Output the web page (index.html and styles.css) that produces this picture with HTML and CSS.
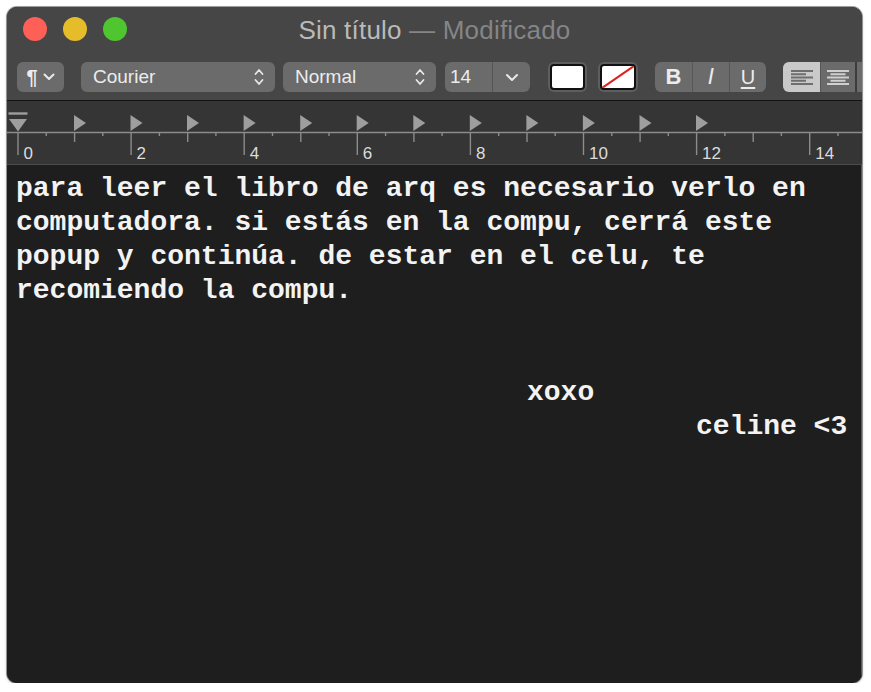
FILE: index.html
```html
<!DOCTYPE html>
<html lang="es">
<head>
<meta charset="utf-8">
<title>Sin título — Modificado</title>
<link rel="stylesheet" href="styles.css">
</head>
<body>
<div class="window">
  <div class="titlebar">
    <div class="lights">
      <span class="light red"></span>
      <span class="light yellow"></span>
      <span class="light green"></span>
    </div>
    <div class="title"><span class="name">Sin título</span><span class="mod"> — Modificado</span></div>
  </div>
  <div class="toolbar">
    <div class="ctl para">
      <span class="pilcrow">¶</span>
      <svg class="chev" width="12" height="8" viewBox="0 0 12 8"><path d="M1.5 1.5 L6 6 L10.5 1.5" fill="none" stroke="#e8e8e8" stroke-width="2" stroke-linecap="round" stroke-linejoin="round"/></svg>
    </div>
    <div class="ctl popup font">
      <span class="label">Courier</span>
      <svg class="updown" width="10" height="18" viewBox="0 0 10 18"><path d="M1.5 6 L5 2 L8.5 6 M1.5 12 L5 16 L8.5 12" fill="none" stroke="#e8e8e8" stroke-width="1.8" stroke-linecap="round" stroke-linejoin="round"/></svg>
    </div>
    <div class="ctl popup style">
      <span class="label">Normal</span>
      <svg class="updown" width="10" height="18" viewBox="0 0 10 18"><path d="M1.5 6 L5 2 L8.5 6 M1.5 12 L5 16 L8.5 12" fill="none" stroke="#e8e8e8" stroke-width="1.8" stroke-linecap="round" stroke-linejoin="round"/></svg>
    </div>
    <div class="ctl combo">
      <span class="field">14</span>
      <span class="drop"><svg width="14" height="9" viewBox="0 0 14 9"><path d="M2 2 L7 7 L12 2" fill="none" stroke="#e8e8e8" stroke-width="2" stroke-linecap="round" stroke-linejoin="round"/></svg></span>
    </div>
    <div class="well"><span class="swatch"></span></div>
    <div class="well second"><span class="swatch none"><svg width="32" height="20" viewBox="0 0 32 20" preserveAspectRatio="none"><path d="M0 20 L32 0" stroke="#e0201c" stroke-width="2"/></svg></span></div>
    <div class="ctl seg biu">
      <span class="cell b">B</span>
      <span class="cell i">I</span>
      <span class="cell u">U</span>
    </div>
    <div class="ctl seg align">
      <span class="cell sel">
        <svg width="22" height="15" viewBox="0 0 22 15"><g fill="#6e6e6e"><rect x="0" y="0" width="22" height="2"/><rect x="0" y="3.25" width="15" height="2"/><rect x="0" y="6.5" width="22" height="2"/><rect x="0" y="9.75" width="15" height="2"/><rect x="0" y="13" width="22" height="2"/></g></svg>
      </span>
      <span class="cell">
        <svg width="22" height="15" viewBox="0 0 22 15"><g fill="#cfcfcf"><rect x="0" y="0" width="22" height="2"/><rect x="3.5" y="3.25" width="15" height="2"/><rect x="0" y="6.5" width="22" height="2"/><rect x="3.5" y="9.75" width="15" height="2"/><rect x="0" y="13" width="22" height="2"/></g></svg>
      </span>
    </div>
  </div>
  <div class="ruler">
    <svg width="855" height="63" viewBox="0 0 855 63">
      <g stroke="#8c8c8c" stroke-width="1.4">
        <line x1="0" y1="31.5" x2="855" y2="31.5"/>
        <path d="M11 31 V54 M124.1 31 V54 M237.2 31 V54 M350.3 31 V54 M463.4 31 V54 M576.5 31 V54 M689.6 31 V54 M802.7 31 V54"/>
        <path d="M67.6 31 V41 M180.7 31 V41 M293.8 31 V41 M406.9 31 V41 M520 31 V41 M633.1 31 V41 M746.2 31 V41 M859.3 31 V41"/>
        <path d="M39.3 31 V35 M95.8 31 V35 M152.4 31 V35 M208.9 31 V35 M265.5 31 V35 M322 31 V35 M378.6 31 V35 M435.1 31 V35 M491.7 31 V35 M548.2 31 V35 M604.8 31 V35 M661.3 31 V35 M717.9 31 V35 M774.4 31 V35 M831 31 V35"/>
      </g>
      <g fill="#9e9e9e">
        <path d="M67 14 L79 22 L67 30 Z"/>
        <path d="M123.5 14 L135.5 22 L123.5 30 Z"/>
        <path d="M180 14 L192 22 L180 30 Z"/>
        <path d="M236.6 14 L248.6 22 L236.6 30 Z"/>
        <path d="M293.2 14 L305.2 22 L293.2 30 Z"/>
        <path d="M349.7 14 L361.7 22 L349.7 30 Z"/>
        <path d="M406.3 14 L418.3 22 L406.3 30 Z"/>
        <path d="M462.8 14 L474.8 22 L462.8 30 Z"/>
        <path d="M519.4 14 L531.4 22 L519.4 30 Z"/>
        <path d="M575.9 14 L587.9 22 L575.9 30 Z"/>
        <path d="M632.5 14 L644.5 22 L632.5 30 Z"/>
        <path d="M689 14 L701 22 L689 30 Z"/>
        <rect x="1.5" y="11.3" width="19" height="2.4"/>
        <path d="M2 18 L20 18 L11 30.5 Z"/>
      </g>
      <g class="nums" fill="#dcdcdc">
        <text x="16.5" y="57.5">0</text>
        <text x="129.6" y="57.5">2</text>
        <text x="242.7" y="57.5">4</text>
        <text x="355.8" y="57.5">6</text>
        <text x="468.9" y="57.5">8</text>
        <text x="582" y="57.5">10</text>
        <text x="695.1" y="57.5">12</text>
        <text x="808.2" y="57.5">14</text>
      </g>
    </svg>
  </div>
  <div class="doc">
    <div class="line">para leer el libro de arq es necesario verlo en</div>
    <div class="line">computadora. si estás en la compu, cerrá este</div>
    <div class="line">popup y continúa. de estar en el celu, te</div>
    <div class="line">recomiendo la compu.</div>
    <div class="line"> </div>
    <div class="line"> </div>
    <div class="line tab9">xoxo</div>
    <div class="line tab12">celine &lt;3</div>
  </div>
</div>
</body>
</html>
```

FILE: styles.css
```css
* { box-sizing: border-box; }

html, body {
  margin: 0;
  padding: 0;
  background: #ffffff;
}

body {
  padding: 7px 0 0 7px;
  font-family: "Liberation Sans", Arial, sans-serif;
}

.window {
  width: 855px;
  height: 676px;
  border-radius: 10px;
  overflow: hidden;
  background: #1e1e1e;
  box-shadow: 0 0 0 1px rgba(0, 0, 0, 0.35), 0 1px 3px rgba(0, 0, 0, 0.35);
  display: flex;
  flex-direction: column;
}

.titlebar {
  height: 45px;
  background: #464646;
  position: relative;
  display: flex;
  align-items: center;
  justify-content: center;
}

.lights {
  position: absolute;
  left: 16px;
  top: 10px;
  display: flex;
  gap: 16px;
}

.light {
  width: 24px;
  height: 24px;
  border-radius: 50%;
  display: block;
}
.red { background: #fe5f57; }
.yellow { background: #e5bd2b; }
.green { background: #4fc530; }

.title {
  font-size: 26px;
  padding-top: 2px;
  letter-spacing: 0.2px;
}
.title .name { color: #b9b9b9; }
.title .mod { color: #858585; }

.toolbar {
  height: 49px;
  background: #464646;
  border-bottom: 1px solid #141414;
  display: flex;
  align-items: flex-start;
  padding: 10px 0 0 10px;
  white-space: nowrap;
  flex: none;
}

.ctl {
  height: 30px;
  border-radius: 6px;
  background: #6b6b6b;
  color: #ececec;
  font-size: 19px;
  display: flex;
  align-items: center;
  flex: none;
}

.para {
  width: 47px;
  justify-content: center;
  gap: 5px;
  margin-right: 17px;
}
.pilcrow {
  font-size: 20px;
  font-weight: bold;
}

.popup {
  justify-content: space-between;
  padding: 0 11px 0 12px;
}
.font { width: 194px; margin-right: 8px; }
.style { width: 153px; margin-right: 9px; }

.combo {
  width: 85px;
  margin-right: 18px;
}
.combo .field {
  width: 48px;
  height: 100%;
  display: flex;
  align-items: center;
  padding-left: 5px;
  border-right: 1px solid #555555;
}
.combo .drop {
  flex: 1;
  display: flex;
  justify-content: center;
  align-items: center;
}

.well {
  width: 39px;
  height: 30px;
  border-radius: 6px;
  background: #5e5e5e;
  padding: 2px;
  margin-right: 11px;
  flex: none;
}
.well.second {
  width: 40px;
  margin-right: 17px;
}
.swatch {
  display: block;
  width: 100%;
  height: 100%;
  background: #ffffff;
  border: 2px solid #111111;
  border-radius: 4px;
  overflow: hidden;
}
.swatch svg { display: block; width: 100%; height: 100%; }

.seg { overflow: hidden; }
.seg .cell {
  height: 100%;
  display: flex;
  align-items: center;
  justify-content: center;
  width: 37px;
  border-left: 1px solid #575757;
}
.seg .cell:first-child { border-left: none; }

.biu {
  width: 111px;
  margin-right: 17px;
}
.biu .b {
  font-weight: bold;
  font-size: 22px;
}
.biu .i {
  font-family: "DejaVu Sans", sans-serif;
  font-style: italic;
  font-size: 21px;
}
.biu .u {
  font-size: 20px;
  text-decoration: underline;
  text-underline-offset: 3px;
  text-decoration-thickness: 2px;
}

.align {
  width: 90px;
  border-radius: 6px 0 0 6px;
}
.align .cell.sel { background: #c9c9c9; }
.align .cell:nth-child(2) { border-right: 2px solid #3c3c3c; }

.ruler {
  height: 64px;
  background: #353535;
  border-bottom: 1px solid #4b4b4b;
  flex: none;
}
.ruler svg { display: block; }
.nums text {
  font-family: "Liberation Sans", Arial, sans-serif;
  font-size: 17px;
}

.doc {
  flex: 1;
  background: #1e1e1e;
  padding: 7px 0 0 9px;
  font-family: "Nimbus Mono PS", "Courier New", "Liberation Mono", monospace;
  font-weight: bold;
  font-size: 28px;
  line-height: 34px;
  color: #f3f3f3;
  border-right: 1px solid #5a5a5a;
}
.line {
  white-space: pre;
  height: 34px;
}
.tab9 { padding-left: 511px; }
.tab12 { padding-left: 680px; }
```
